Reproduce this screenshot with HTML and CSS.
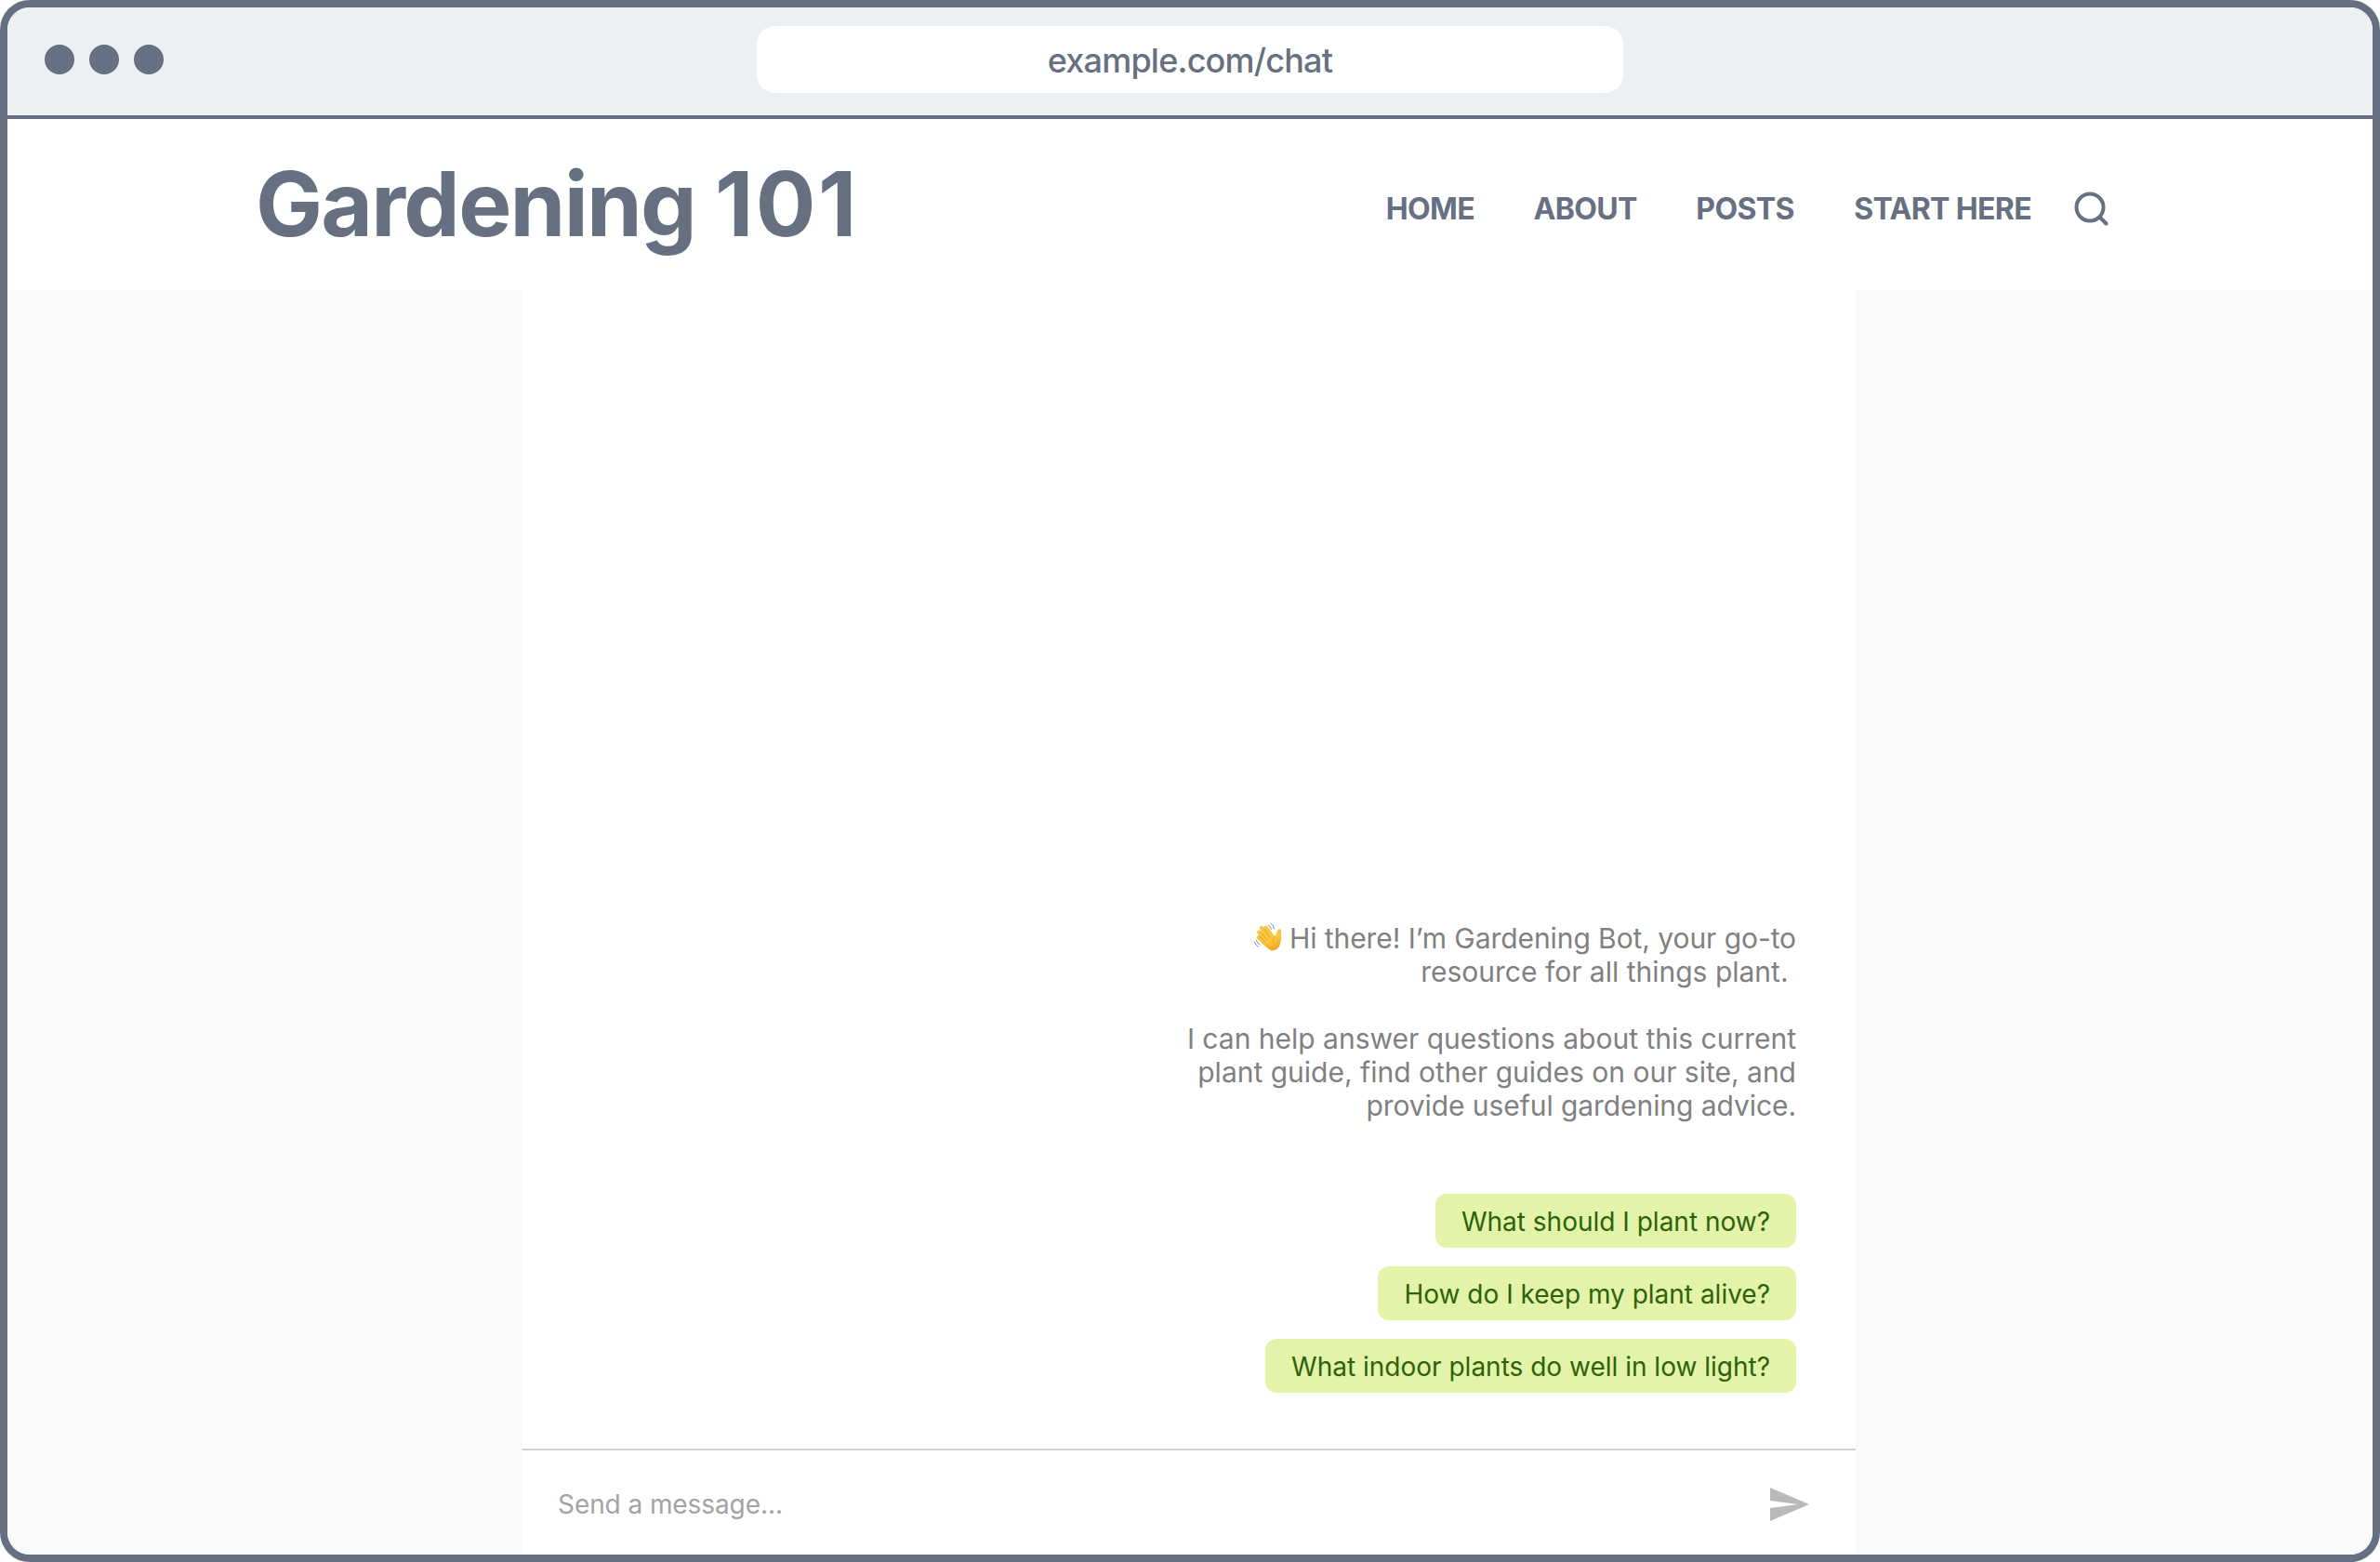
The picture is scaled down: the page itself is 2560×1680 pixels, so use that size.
FILE: index.html
```html
<!DOCTYPE html>
<html lang="en">
<head>
<meta charset="utf-8">
<title>Gardening 101</title>
<link rel="stylesheet" href="styles.css">
</head>
<body>
<div class="browser">
  <div class="titlebar">
    <div class="dots"><span class="dot"></span><span class="dot"></span><span class="dot"></span></div>
    <div class="url">example.com/chat</div>
  </div>
  <header class="header">
    <h1 class="brand">Gardening <span class="digits">101</span></h1>
    <nav class="nav">
      <a class="nav-link">HOME</a>
      <a class="nav-link">ABOUT</a>
      <a class="nav-link">POSTS</a>
      <a class="nav-link nav-last">START HERE</a>
      <svg class="search" viewBox="0 0 38 38"><circle cx="17" cy="17" r="14.5"/><path d="M27.5 27.5L34.5 34.5"/></svg>
    </nav>
  </header>
  <main class="page">
    <section class="chat">
      <div class="messages">
        <div class="message">
          <p class="para"><span class="tight"><svg class="wave" viewBox="21 18 93 93">
            <defs><linearGradient id="skin" gradientUnits="userSpaceOnUse" x1="50" y1="30" x2="85" y2="110"><stop offset="0" stop-color="#f6c544"/><stop offset=".6" stop-color="#fcc63e"/><stop offset="1" stop-color="#f0a51c"/></linearGradient></defs>
            <g class="hand-shape"><path d="M62 35L84 66M48 36L74 74M40 50L68 84M39 67L66 92"/><path class="palm" d="M58 82L78 58L93 62C96 54 97 46 102 41C106 37 112 41 111 47C110 56 113 65 110 78C108 94 102 106 87 109C76 111 68 103 58 92Z"/></g>
            <path class="crease" d="M56 39L75 67M45 48L67 77M41 62L60 83M93 62C87 67 84 73 84 79"/>
            <path class="motion" d="M70 26Q76 31 79 40M78 21Q85 27 89 38M31 76Q34 84 42 90M24 81Q28 91 37 97"/>
          </svg> Hi there! I’m Gardening Bot, your go-to</span><br>resource for all things plant.&nbsp;</p>
          <p class="para">I can help answer questions about this current<br>plant guide, find other guides on our site, and<br><span class="tight">provide useful gardening advice.</span></p>
        </div>
        <button class="chip">What should I plant now?</button>
        <button class="chip">How do I keep my plant alive?</button>
        <button class="chip">What indoor plants do well in low light?</button>
      </div>
      <div class="composer">
        <span class="placeholder">Send a message...</span>
        <svg class="send" viewBox="0 0 42 36"><path d="M0 0L42 18L0 36V22L30 18L0 14Z"/></svg>
      </div>
    </section>
  </main>
</div>
</body>
</html>
```
FILE: styles.css
```css
* { box-sizing: border-box; }
body { margin: 0; background: #fff; font-family: Inter, sans-serif; }
.browser { width: 2560px; height: 1680px; border: 8px solid #677081; border-radius: 32px; overflow: hidden; display: flex; flex-direction: column; background: #fff; }
.titlebar { height: 120px; flex: none; background: #ecf0f3; border-bottom: 4px solid #677081; display: grid; grid-template-columns: 1fr 932px 1fr; align-items: start; padding: 20px 40px 0; }
.dots { display: flex; gap: 16px; padding-top: 20px; }
.dot { width: 32px; height: 32px; border-radius: 50%; background: #677081; }
.url { height: 72px; border-radius: 20px; background: #fff; color: #677081; font-size: 36px; font-weight: 500; line-height: 74px; text-align: center; letter-spacing: -0.022em; }
.header { height: 184px; flex: none; display: flex; justify-content: space-between; align-items: center; padding: 0 283px 0 267px; color: #677081; }
.brand { margin: 0; font-size: 96px; font-weight: 700; line-height: 116px; letter-spacing: -0.018em; padding-bottom: 2px; }
.digits { letter-spacing: 0.026em; }
.nav { display: flex; align-items: center; gap: 63.5px; padding-top: 10px; }
.nav-link { font-size: 32px; font-weight: 700; line-height: 40px; letter-spacing: -0.02em; white-space: nowrap; }
.nav-last { margin: 0 -17.5px 0 1px; }
.search { width: 38px; height: 38px; fill: none; stroke: #677081; stroke-width: 4; stroke-linecap: round; }
.page { flex: 1; display: flex; background: #f9f9f9; padding-left: 554px; }
.chat { width: 1434px; background: #fff; display: flex; flex-direction: column; }
.messages { flex: 1; display: flex; flex-direction: column; justify-content: flex-end; align-items: flex-end; gap: 20px; padding: 0 64px 60px; }
.message { margin-bottom: 57px; text-align: right; color: #808080; font-size: 30px; line-height: 36px; }
.para { margin: 0; white-space: nowrap; }
.para + .para { margin-top: 36px; }
.tight { letter-spacing: -0.07px; }
.wave { width: 31px; height: 31px; vertical-align: -3px; }
.hand-shape { fill: none; stroke: url(#skin); stroke-width: 13; stroke-linecap: round; }
.palm { fill: url(#skin); stroke: none; }
.crease { fill: none; stroke: #d98c1f; stroke-width: 2; stroke-linecap: round; }
.motion { fill: none; stroke: #858b91; stroke-width: 3; stroke-linecap: round; }
.chip { height: 58px; border: 0; border-radius: 12px; padding: 2px 28px 0; background: #e3f3a9; color: #2d6208; font: 400 28px/56px Inter, sans-serif; white-space: nowrap; }
.composer { height: 114px; border-top: 2px solid #d0d0d0; display: flex; align-items: center; justify-content: space-between; padding: 4px 50px 0 38px; }
.placeholder { font-size: 28px; line-height: 34px; color: #a3a3a3; letter-spacing: -0.08px; }
.send { width: 42px; height: 36px; fill: #b9b9b9; }
```
